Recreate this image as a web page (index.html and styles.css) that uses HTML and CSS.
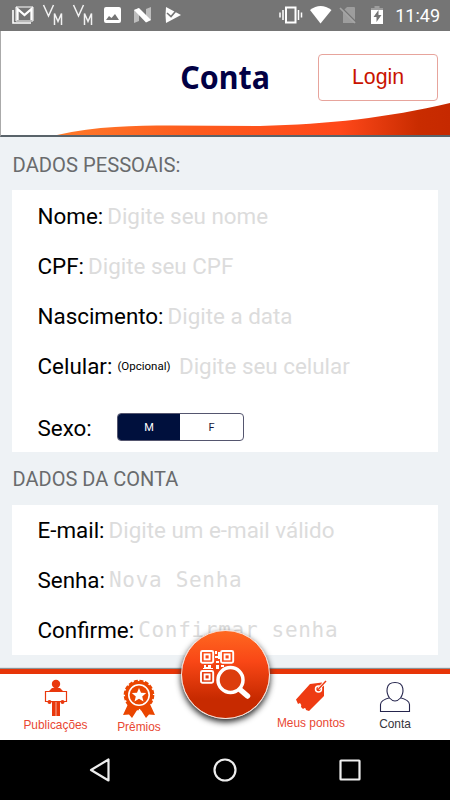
FILE: index.html
```html
<!DOCTYPE html>
<html lang="pt-BR">
<head>
<meta charset="utf-8">
<title>Conta</title>
<link rel="stylesheet" href="styles.css">
</head>
<body>
<div class="phone">
  <div class="status">
    <svg class="status-icons" viewBox="0 0 450 31" width="450" height="31">
      <g fill="none" stroke="#fff" stroke-width="2">
        <path d="M13 10v13h18" stroke-width="1.600"/>
        <path d="M17.5 20V9l7 6 7-6V20" stroke-width="2.300"/>
        <path d="M16 7h17v14H16z" stroke-width="1"/>
      </g>
      <g fill="none" stroke="#f2f2f2" stroke-width="1.500">
        <path d="M43.500 5l5 11 5-11M54.500 25V13.500l3.500 8L61.500 13.500V25"/>
        <path d="M73.500 5l5 11 5-11M84.500 25V13.500l3.500 8L91.500 13.500V25"/>
      </g>
      <path fill="#fff" fill-rule="evenodd" d="M106 7h13q2 0 2 2v12q0 2-2 2h-13q-2 0-2-2V9q0-2 2-2zm0 13h13l-4-6-3.500 4-2.500-2z"/>
      <path fill="#bdbdbd" d="M134 10l5-2v13l-5 2zM146 9l5-2v13l-5 2z"/>
      <path fill="#fff" d="M134 10l5-2 12 12-5 2.500z"/>
      <path fill="#fff" d="M166 7l15 8-15 8q-1-8 0-16z"/>
      <path d="M167 13l4 3.500 7-8" fill="none" stroke="#757575" stroke-width="1.600"/>
      <g fill="none" stroke="#fff"><rect x="286" y="7.500" width="9.500" height="15" stroke-width="2"/><path d="M283 10v10M298.500 10v10M280 12.500v5M301.500 12.500v5" stroke-width="1.500"/></g>
      <path fill="#fff" d="M310 10q10.500-8 21.500 0L320.500 23.500z"/>
      <path fill="#9d9d9d" d="M343 11l4-4h7q1 0 1 1v15h-12z"/>
      <path d="M341 7l15 15" stroke="#757575" stroke-width="1.500"/><path d="M340 8l15 15" stroke="#a5a5a5" stroke-width="1.700"/>
      <path fill="#9d9d9d" d="M374.500 6h5v2h3.500v3h-12V8h3.500z"/><path fill="#fff" d="M371 10h12v14h-12z"/>
      <path fill="#757575" d="M378.500 10l-5 7h3v5l5-7h-3z"/>
    </svg>
    <span class="clock">11:49</span>
  </div>
  <header class="header">
    <svg class="wave" viewBox="0 0 450 32" width="450" height="32">
      <defs><linearGradient id="waveFill"><stop offset="0" stop-color="#ff7a2a"/><stop offset=".35" stop-color="#fd5b1d"/><stop offset=".72" stop-color="#ff481a"/><stop offset=".92" stop-color="#c92c00"/><stop offset="1" stop-color="#c62900"/></linearGradient></defs>
      <path fill="url(#waveFill)" d="M57 32C96 23 135 22.500 170 22.500L260 23C330 21 386 15 450 0V32z"/>
    </svg>
    <h1 class="title">Conta</h1>
    <a class="login">Login</a>
  </header>
  <main class="content">
    <h2 class="section-title">DADOS PESSOAIS:</h2>
    <section class="card personal">
      <div class="row"><span class="label">Nome:</span><span class="hint">Digite seu nome</span></div>
      <div class="row"><span class="label">CPF:</span><span class="hint">Digite seu CPF</span></div>
      <div class="row"><span class="label">Nascimento:</span><span class="hint">Digite a data</span></div>
      <div class="row"><span class="label">Celular:</span><span class="optional">(Opcional)</span><span class="hint">Digite seu celular</span></div>
      <div class="row gender"><span class="label">Sexo:</span><div class="segmented"><span class="segment active">M</span><span class="segment">F</span></div></div>
    </section>
    <h2 class="section-title account">DADOS DA CONTA</h2>
    <section class="card">
      <div class="row"><span class="label">E-mail:</span><span class="hint">Digite um e-mail válido</span></div>
      <div class="row"><span class="label">Senha:</span><span class="hint mono">Nova Senha</span></div>
      <div class="row"><span class="label">Confirme:</span><span class="hint mono">Confirmar senha</span></div>
    </section>
  </main>
  <nav class="tabs">
    <a class="tab publications">
      <svg width="24" height="38" viewBox="0 0 24 38"><circle cx="12" cy="5" r="4.200" fill="#e9380d"/><path fill="#e9380d" d="M8 9h8l3 3H5zM8 23h3.700v14H8zM12.300 23H16v14h-3.700z"/><path d="M1.500 12.500h21v10h-21z" fill="#fff" stroke="#e9380d" stroke-width="1.200"/><circle cx="5.500" cy="23" r="2" fill="#e9380d"/><circle cx="18.500" cy="23" r="2" fill="#e9380d"/></svg>
      <span>Publicações</span>
    </a>
    <a class="tab prizes">
      <svg width="34" height="40" viewBox="0 0 34 40"><path fill="#ea4500" d="M7 23L1 36l6-.5 3 3.500 7-11 7 11 3-3.500 6 .5-6-13z"/><circle cx="17" cy="16" r="14" fill="#ea4500"/><circle cx="17" cy="16" r="14.300" fill="none" stroke="#ea4500" stroke-width="2" stroke-dasharray="4 1.615"/><circle cx="17" cy="16" r="10.200" fill="none" stroke="#fff" stroke-width="1.600"/><path fill="#fff" d="M17 9l2 4.700 5.200.4-4 3.400 1.300 5.100-4.500-2.800-4.500 2.800 1.300-5.100-4-3.400 5.200-.4z"/></svg>
      <span>Prêmios</span>
    </a>
    <div class="tab-space"></div>
    <a class="tab points">
      <svg width="32" height="32" viewBox="0 0 32 32"><path fill="#ee3b13" d="M15 4L27 2.500l2 3V16L14 31l-3-1q0-2-1.500-2L8 29l-2-2q1-2-1-4l-2 1-2-4.500z"/><circle cx="23.500" cy="9" r="3" fill="none" stroke="#fff" stroke-width="1.500"/><path d="M23.500 9L31 1" stroke="#fff" stroke-width="3"/><path d="M23.500 9L31 1" stroke="#ee3b13" stroke-width="1.500"/></svg>
      <span>Meus pontos</span>
    </a>
    <a class="tab profile">
      <svg width="32" height="32" viewBox="0 0 32 32" fill="#fff" stroke="#25254d" stroke-width="1.100"><path d="M1.500 30.500v-7q0-4.500 10-7h9q10 2.500 10 7v7z"/><path d="M16 1.500C6 1.500 7 12 10.500 17q5.500 6 11 0C25 12 26 1.500 16 1.500z"/></svg>
      <span>Conta</span>
    </a>
    <a class="scan">
      <svg width="52" height="52" viewBox="0 0 52 52"><g fill="none" stroke="#fff" stroke-width="1.900"><rect x="1" y="2" width="12.200" height="11.800" rx="1.500"/><rect x="21" y="2" width="12.200" height="11.800" rx="1.500"/><rect x="1" y="22" width="12.200" height="11.800" rx="1.500"/><rect x="4.600" y="5.400" width="5" height="5"/><rect x="24.600" y="5.400" width="5" height="5"/><rect x="4.600" y="25.400" width="5" height="5"/></g><path fill="#fff" d="M15 2h2v3h-2zM18 3h2v7h-2zM15 7h3v2h-3zM16 12h3v2h-3zM4 16h2v2h2v-2h3v3h2v1H3v-1h1zM16 16h3v4h-3zM21 16h3v2h-3z"/><circle cx="30.500" cy="31" r="12.500" fill="#dc3d0e" stroke="#fff" stroke-width="3.500"/><path d="M40.500 41l7 6" stroke="#fff" stroke-width="5.500" stroke-linecap="round"/></svg>
    </a>
  </nav>
  <div class="system">
    <svg width="24" height="24" viewBox="0 0 24 24"><path d="M3 12L20.500 1.500v21z"/></svg>
    <svg width="24" height="24" viewBox="0 0 24 24"><circle cx="12" cy="12" r="10.500"/></svg>
    <svg width="24" height="24" viewBox="0 0 24 24"><rect x="2.500" y="2.500" width="19" height="19" rx=".5"/></svg>
  </div>
</div>
</body>
</html>
```

FILE: styles.css
```css
* { box-sizing: border-box; }
body { margin: 0; font-family: Roboto, sans-serif; }
.phone { width: 450px; height: 800px; display: flex; flex-direction: column; background: #eef2f5; overflow: hidden; }
.status { height: 31px; flex: none; background: #757575; position: relative; display: flex; justify-content: flex-end; align-items: center; padding-right: 10px; }
.status-icons { position: absolute; left: 0; top: 0; }
.clock { color: #fff; font-size: 18px; font-weight: 400; }
.header { height: 106px; flex: none; background: #fff; border-left: 1px solid #aaa; border-bottom: 2px solid #59636a; position: relative; display: flex; align-items: flex-start; justify-content: flex-end; padding: 23px 12px 0 0; }
.wave { position: absolute; left: -1px; bottom: 0; }
.title { margin: 3px 48px 0 0; font: bold 32.5px/40px "Noto Sans", sans-serif; color: #020044; transform: scaleX(.935); transform-origin: right; }
.login { width: 120px; height: 47px; border: 1px solid #e7a49c; border-radius: 4px; color: #c91400; font: 21.300px/45px "Liberation Sans", sans-serif; text-align: center; }
.content { height: 532px; flex: none; padding: 0 12px; }
.section-title { margin: 0; padding-left: .6px; height: 53px; line-height: 56px; font-size: 20.200px; font-weight: 400; color: #696b6d; }
.account { line-height: 54px; font-size: 20px; }
.card { background: #fff; width: 426px; padding: 0 25.500px; }
.personal { height: 262px; }
.row { height: 50px; display: flex; align-items: center; white-space: nowrap; font-size: 22.400px; }
.personal .row { padding-top: 1px; }
.label { color: #000; margin-right: 4px; }
.hint { color: #dcdcdc; }
.optional { font-size: 11.500px; margin: 0 8.500px 0 1px; }
.mono { font-family: "DejaVu Sans Mono", monospace; font-size: 21px; letter-spacing: .7px; }
.personal .gender { height: 62px; padding-top: 14px; }
.segmented { display: flex; width: 127px; height: 28px; margin: -2px 0 0 21px; border: 1px solid #55566f; border-radius: 4px; overflow: hidden; font-size: 11px; line-height: 27px; text-align: center; }
.segment { flex: 1; color: #17173d; }
.active { background: #00103d; color: #fff; }
.tabs { height: 71px; flex: none; background: #fff; border-top: 5px solid #e73508; box-shadow: 0 -1px 1px #8b9295; position: relative; display: flex; }
.tab { display: flex; flex-direction: column; align-items: center; font: 11.900px/14px "Liberation Sans", sans-serif; color: #e94732; white-space: nowrap; }
.publications { width: 111px; padding-top: 5px; }
.prizes { width: 56px; padding-top: 5px; }
.prizes span { margin-top: 1px; }
.tab-space { width: 104px; }
.points { width: 80px; padding-top: 6px; }
.profile { width: 88px; padding-top: 7px; color: #34343c; }
.publications span { margin-top: 1px; }
.points span { margin-top: 4px; }
.profile span { margin-top: 4px; }
.scan { position: absolute; left: 181px; top: -44px; width: 89px; height: 89px; border-radius: 50%; border: 1.500px solid #f6ded5; background: linear-gradient(#ff6820, #f94716 35%, #c72a00 78%); box-shadow: 0 3px 6px #222; }
.scan svg { position: absolute; left: 18px; top: 18px; }
.system { height: 60px; flex: none; background: #000; display: flex; justify-content: center; align-items: center; gap: 101px; }
.system svg { fill: none; stroke: #eee; stroke-width: 2.200; stroke-linejoin: round; }
```
